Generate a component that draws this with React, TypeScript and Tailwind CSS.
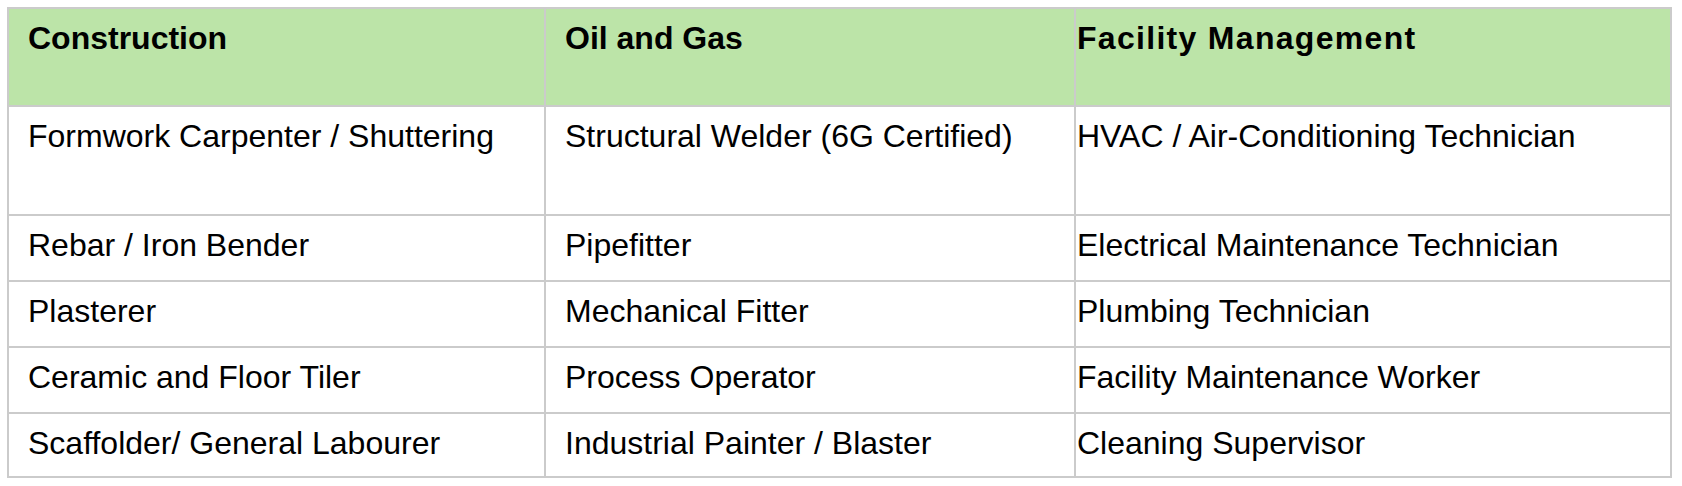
const headers = ['Construction', 'Oil and Gas', 'Facility Management'];

const rows = [
  ['Formwork Carpenter / Shuttering', 'Structural Welder (6G Certified)', 'HVAC / Air-Conditioning Technician'],
  ['Rebar / Iron Bender', 'Pipefitter', 'Electrical Maintenance Technician'],
  ['Plasterer', 'Mechanical Fitter', 'Plumbing Technician'],
  ['Ceramic and Floor Tiler', 'Process Operator', 'Facility Maintenance Worker'],
  ['Scaffolder/ General Labourer', 'Industrial Painter / Blaster', 'Cleaning Supervisor'],
];

// first two columns have a roomy left inset, the last one hugs its border
const padX = ['pl-[19px]', 'pl-[19px]', 'pl-[1px]'];
// the last header is set a bit wider than the others
const headTrack = ['', '', 'tracking-[1.3px]'];

export default function App() {
  return (
    <div className="min-h-screen bg-white pt-[7px] pl-[7px] font-['Liberation_Sans',Arial,sans-serif] text-black">
      <div className="grid w-[1665px] grid-cols-[535px_528px_594px] grid-rows-[96px_107px_64px_64px_64px_62px] gap-[2px] bg-[#cbcbcb] p-[2px]">
        {headers.map((h, i) => (
          <div key={h} className={`bg-[#bce4a8] pt-[11px] text-[32px] leading-[36px] font-bold ${padX[i]} ${headTrack[i]}`}>
            {h}
          </div>
        ))}
        {rows.map((row, r) =>
          row.map((cell, c) => (
            <div key={`${r}-${c}`} className={`bg-white pt-[11px] text-[32px] leading-[36px] ${padX[c]}`}>
              {cell}
            </div>
          )),
        )}
      </div>
    </div>
  );
}
